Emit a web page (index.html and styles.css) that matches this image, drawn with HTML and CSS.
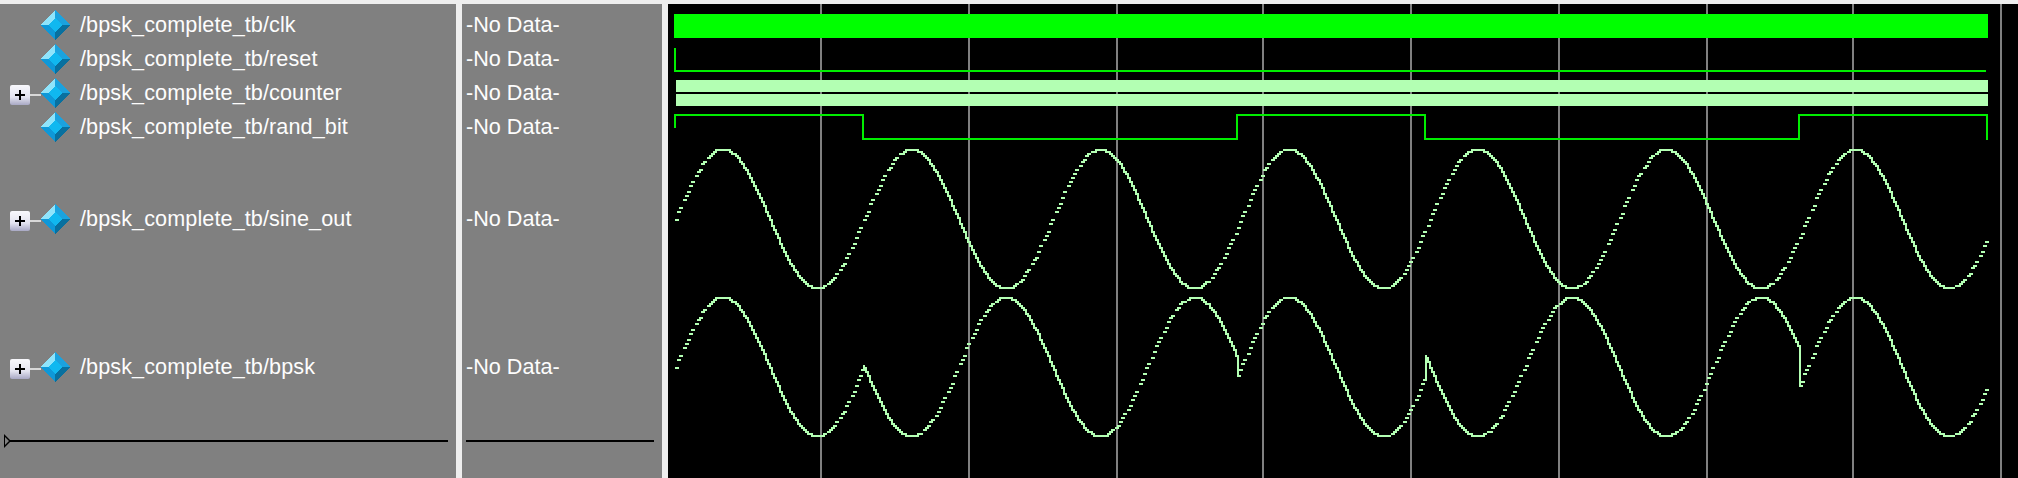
FILE: index.html
```html
<!DOCTYPE html>
<html lang="en">
<head>
    <meta charset="UTF-8">
    <title>Wave - bpsk_complete_tb</title>
    <link rel="stylesheet" href="styles.css">
    <script src="wave.js" defer></script>
</head>
<body>
    <svg class="defs" width="0" height="0">
        <symbol id="diamond" viewBox="0 0 30 30">
            <polygon points="15,0 15,8 8,15 0,15" fill="#8fe4fb"/>
            <polygon points="15,0 30,15 22,15 15,8" fill="#1ba2de"/>
            <polygon points="0,15 8,15 15,22 15,30" fill="#0f98d8"/>
            <polygon points="30,15 15,30 15,22 22,15" fill="#08709f"/>
            <polygon points="15,8 22,15 15,22 8,15" fill="#10b8f0"/>
        </symbol>
    </svg>

    <div class="window">
        <!-- signal names -->
        <div class="panel names">
            <div class="row">
                <svg class="icon"><use href="#diamond"/></svg>
                <span class="label">/bpsk_complete_tb/clk</span>
            </div>
            <div class="row">
                <svg class="icon"><use href="#diamond"/></svg>
                <span class="label">/bpsk_complete_tb/reset</span>
            </div>
            <div class="row">
                <span class="expand"></span>
                <svg class="icon"><use href="#diamond"/></svg>
                <span class="label">/bpsk_complete_tb/counter</span>
            </div>
            <div class="row">
                <svg class="icon"><use href="#diamond"/></svg>
                <span class="label">/bpsk_complete_tb/rand_bit</span>
            </div>
            <div class="row tall">
                <span class="expand"></span>
                <svg class="icon"><use href="#diamond"/></svg>
                <span class="label">/bpsk_complete_tb/sine_out</span>
            </div>
            <div class="row tall">
                <span class="expand"></span>
                <svg class="icon"><use href="#diamond"/></svg>
                <span class="label">/bpsk_complete_tb/bpsk</span>
            </div>
            <div class="cursor-line with-arrow"></div>
        </div>

        <!-- values at cursor -->
        <div class="panel values">
            <div class="row">-No Data-</div>
            <div class="row">-No Data-</div>
            <div class="row">-No Data-</div>
            <div class="row">-No Data-</div>
            <div class="row tall">-No Data-</div>
            <div class="row tall">-No Data-</div>
            <div class="cursor-line"></div>
        </div>

        <!-- waveforms, drawn in page coordinates -->
        <div class="waves">
            <svg class="wave-canvas" viewBox="668 4 1350 474" width="1350" height="474" shape-rendering="crispEdges">
                <g id="grid" class="grid"></g>
                <rect class="clk" x="674" y="14" width="1314" height="24"/>
                <polyline class="logic" points="675,48 675,71 1986,71"/>
                <rect class="bus" x="676" y="80" width="1312" height="12"/>
                <rect class="bus" x="676" y="94" width="1312" height="12"/>
                <polyline class="logic" points="675,128 675,115 863,115 863,139 1237,139 1237,115 1425,115 1425,139 1799,139 1799,115 1987,115 1987,140"/>
                <path id="sine" class="analog"/>
                <path id="bpsk" class="analog"/>
            </svg>
        </div>
    </div>
</body>
</html>
```

FILE: styles.css
```css
html, body {
    margin: 0;
    height: 100%;
    overflow: hidden;
}
body {
    background: #eeeeee;
    font-family: "Liberation Sans", Arial, sans-serif;
}
.defs {
    position: absolute;
}
.window {
    display: flex;
    height: 474px;
    margin-top: 4px;
}
.panel {
    background: #808080;
    padding-top: 4px;
    box-sizing: border-box;
    color: #fdfdfd;
    font-size: 21.6px;
}
.names {
    width: 456px;
}
.values {
    width: 200px;
    margin-left: 6px;
}
.row {
    display: flex;
    align-items: center;
    height: 34px;
    box-sizing: border-box;
}
.row.tall {
    height: 148px;
    padding-top: 2px;
}
.names .row {
    padding-left: 40px;
}
.values .row {
    padding-left: 4px;
}
.icon {
    width: 30px;
    height: 30px;
    flex: none;
    shape-rendering: crispEdges;
}
.label {
    margin-left: 10px;
    letter-spacing: 0.1px;
}
/* plus box: two black bars over the bevel */
.expand {
    position: relative;
    width: 20px;
    height: 20px;
    flex: none;
    margin: 4px 10px 0 -30px;
    background:
        linear-gradient(#000, #000) no-repeat 5px 9px / 10px 2px,
        linear-gradient(#000, #000) no-repeat 9px 5px / 2px 10px,
        linear-gradient(#f8f8fc, #e4e4f0 60%, #a8a8c4);
    border-radius: 2px;
}
/* stub joining the plus box to the diamond */
.expand::after {
    content: "";
    position: absolute;
    left: 20px;
    top: 9px;
    width: 11px;
    height: 2px;
    background: #d8d8d8;
}
.cursor-line {
    height: 2px;
    background: #000;
    margin: 0 8px 0 4px;
    position: relative;
}
/* hollow arrow at the start of the cursor line */
.with-arrow::before {
    content: "";
    position: absolute;
    left: 0;
    top: -6px;
    border-left: 7px solid #000;
    border-top: 7px solid transparent;
    border-bottom: 7px solid transparent;
}
.with-arrow::after {
    content: "";
    position: absolute;
    left: 1px;
    top: -3px;
    border-left: 4px solid #808080;
    border-top: 4px solid transparent;
    border-bottom: 4px solid transparent;
}
.waves {
    flex: 1;
    margin-left: 6px;
    background: #000;
    box-shadow: -6px 0 0 #eeeeee, -3px 0 0 #f8f8f8;
}
.wave-canvas {
    display: block;
}
.grid line {
    stroke: #808080;
    stroke-width: 2;
}
.clk {
    fill: #00ff00;
}
.bus {
    fill: #b3ffb3;
}
.logic {
    fill: none;
    stroke: #00ee00;
    stroke-width: 2;
}
.analog {
    fill: none;
    stroke: #b3ffb3;
    stroke-width: 2;
    stroke-linecap: square;
}
```

FILE: wave.js
```js
// draws the grid and the two analog traces

const PERIOD = 188.7;
const START = 675;
const END = 1987;
const AMP = 69.5;
const DASH_STEP = 2.4;

// grid lines
const gridXs = [821, 969, 1117, 1263, 1411, 1559, 1707, 1853, 2001];
const grid = document.getElementById('grid');
gridXs.forEach(function (x) {
    const line = document.createElementNS('http://www.w3.org/2000/svg', 'line');
    line.setAttribute('x1', x);
    line.setAttribute('x2', x);
    line.setAttribute('y1', 4);
    line.setAttribute('y2', 478);
    grid.appendChild(line);
});

function snap(v) {
    return Math.round(v / 2) * 2;
}

// rising parts come out as loose dashes, falling parts as a solid staircase
function trace(center, flips) {
    let d = '';
    let sign = 1;
    let lastX = null;
    let lastY = null;
    let next = 0;
    let nextDash = START;
    for (let t = START; t <= END; t += 1) {
        let flipped = false;
        if (next < flips.length && t >= flips[next]) {
            sign = -sign;
            next++;
            flipped = true;
        }
        const phase = 2 * Math.PI * (t - START) / PERIOD;
        const x = snap(t);
        const y = snap(center - sign * AMP * Math.sin(phase));
        const rising = sign * Math.cos(phase) > 0;
        if (flipped) {
            d += 'M' + x + ' ' + lastY + 'V' + y;
        }
        if (rising) {
            if (t >= nextDash) {
                d += 'M' + x + ' ' + y + 'h2';
                nextDash += DASH_STEP;
                while (nextDash <= t) {
                    nextDash += DASH_STEP;
                }
            }
        } else if (lastX !== null) {
            d += 'M' + lastX + ' ' + lastY + 'H' + x + 'V' + y;
        }
        lastX = x;
        lastY = y;
    }
    return d;
}

document.getElementById('sine').setAttribute('d', trace(219, []));
document.getElementById('bpsk').setAttribute('d', trace(367, [863, 1237, 1425, 1799]));
```
